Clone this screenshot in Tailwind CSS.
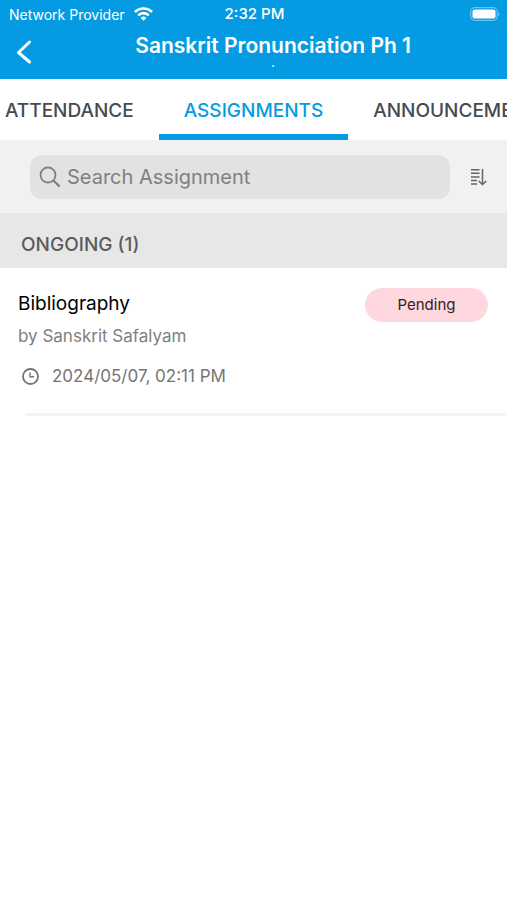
<!DOCTYPE html>
<html lang="en">
<head>
    <meta charset="UTF-8" />
    <meta name="viewport" content="width=device-width, initial-scale=1.0" />
    <title>Assignments</title>
    <script src="https://cdn.jsdelivr.net/npm/@tailwindcss/browser@4"></script>
</head>
<body class="min-h-screen bg-white font-['Inter',sans-serif] overflow-x-hidden">

    <header class="bg-[#049be3] text-white">
        <!-- Status bar -->
        <div class="grid grid-cols-3 items-center h-7 pl-[9px] pr-[7px] text-[14px]">
            <div class="flex items-center gap-[9px] whitespace-nowrap">
                <span>Network Provider</span>
                <svg class="w-[19px] h-[14px] shrink-0" viewBox="0 0 19 14" fill="none" stroke="currentColor" stroke-width="2.600" aria-hidden="true">
                    <path d="M1 5a12 12 0 0 1 17 0" />
                    <path d="M4.200 8.300a7.500 7.500 0 0 1 10.600 0" />
                    <path d="M9.500 13.800L6.600 10.900a4.100 4.100 0 0 1 5.800 0z" fill="currentColor" stroke="none" />
                </svg>
            </div>
            <span class="text-center text-[15px] font-medium">2:32 PM</span>
            <svg class="w-[30px] h-[14px] justify-self-end" viewBox="0 0 30 14" aria-hidden="true">
                <rect x="0.700" y="0.700" width="26.600" height="12.600" rx="4" fill="none" stroke="#fff" stroke-opacity="0.4" stroke-width="1.200" />
                <rect x="2.500" y="2.500" width="23" height="9" rx="2" fill="#fff" />
                <path d="M28.500 5v4c1.400-.6 1.400-3.400 0-4z" fill="#fff" fill-opacity="0.5" />
            </svg>
        </div>

        <!-- Title bar -->
        <div class="flex items-start h-[51px] pl-4 pr-24">
            <button type="button" aria-label="Back" class="pt-3">
                <svg class="w-4 h-6" viewBox="0 0 16 24" fill="none" stroke="currentColor" stroke-width="3" stroke-linecap="round" stroke-linejoin="round">
                    <path d="M13.500 2L2.500 12.500L13.500 22" />
                </svg>
            </button>
            <div class="flex-1 text-right">
                <h1 class="inline-block text-center text-[21px] leading-9 font-semibold whitespace-nowrap">
                    Sanskrit Pronunciation Ph 1
                    <span class="block text-[11px] leading-none -mt-1.5">.</span>
                </h1>
            </div>
        </div>
    </header>

    <!-- Scrollable tabs -->
    <nav class="flex h-[61px] overflow-hidden whitespace-nowrap text-[19px] font-medium text-[#444b52]">
        <a href="#attendance" class="flex shrink-0 items-center pt-[3px] pl-[5px] pr-[25px]">ATTENDANCE</a>
        <a href="#assignments" aria-current="page" class="flex shrink-0 items-center border-b-[6px] border-[#049be3] pt-[9px] px-[25px] text-[#049be3]">ASSIGNMENTS</a>
        <a href="#announcements" class="flex shrink-0 items-center pt-[3px] px-[25px]">ANNOUNCEMENTS</a>
    </nav>

    <!-- Search and sort -->
    <div class="flex items-center h-[73px] bg-[#f1f1f1] pl-[30px] pr-[19px] gap-5">
        <label class="flex flex-1 items-center gap-1.5 h-11 px-[9px] rounded-xl bg-[#e2e2e2] text-[#808080]">
            <svg class="w-[22px] h-[22px] shrink-0" viewBox="0 0 22 22" fill="none" stroke="currentColor" stroke-width="1.800" stroke-linecap="round" aria-hidden="true">
                <circle cx="9" cy="9" r="7.500" />
                <path d="M14.500 14.500L20 20" stroke-width="2.400" />
            </svg>
            <input type="search" aria-label="Search Assignment" placeholder="Search Assignment" class="flex-1 min-w-0 bg-transparent text-[20px] outline-none placeholder:text-[#808080]" />
        </label>
        <button type="button" aria-label="Sort" class="text-[#666]">
            <svg class="w-[18px] h-[18px]" viewBox="0 0 18 18" fill="none" stroke="currentColor" stroke-width="1.500">
                <path d="M1 1.700h8.500M1 5.300h8.500M1 8.900h8.500M1 12.500h6M1 16.100h6" />
                <path d="M12.500 1v15.500M8.700 13l3.800 3.500L16.300 13" />
            </svg>
        </button>
    </div>

    <main>
        <h2 class="flex items-center h-[55px] pl-[21px] pt-2.5 bg-[#e7e7e7] text-[19px] font-medium text-[#5c5c5c]">ONGOING (1)</h2>

        <article class="flex items-start justify-between pt-5 pl-[18px] pr-[19px]">
            <div>
                <h3 class="text-[19px] leading-8 text-black">Bibliography</h3>
                <p class="text-[17px] leading-8 text-[#808080]">by Sanskrit Safalyam</p>
                <p class="flex items-center gap-[13px] mt-2 pl-1 text-[17px] leading-8 text-[#757575]">
                    <svg class="w-[17px] h-[17px]" viewBox="0 0 17 17" fill="none" stroke="currentColor" stroke-width="1.800" aria-hidden="true">
                        <circle cx="8.500" cy="8.500" r="7.500" />
                        <path d="M8 4.500v4.300h4" stroke-width="1.400" />
                    </svg>
                    <time datetime="2024-05-07T14:11">2024/05/07, 02:11 PM</time>
                </p>
            </div>
            <span class="w-[123px] rounded-full bg-[#ffd8df] text-center text-[15px] leading-[34px] text-[#2e2225]">Pending</span>
        </article>
        <hr class="ml-[25px] mt-[21px] border-t-[3px] border-[#f4f4f4]" />
    </main>

</body>
</html>
